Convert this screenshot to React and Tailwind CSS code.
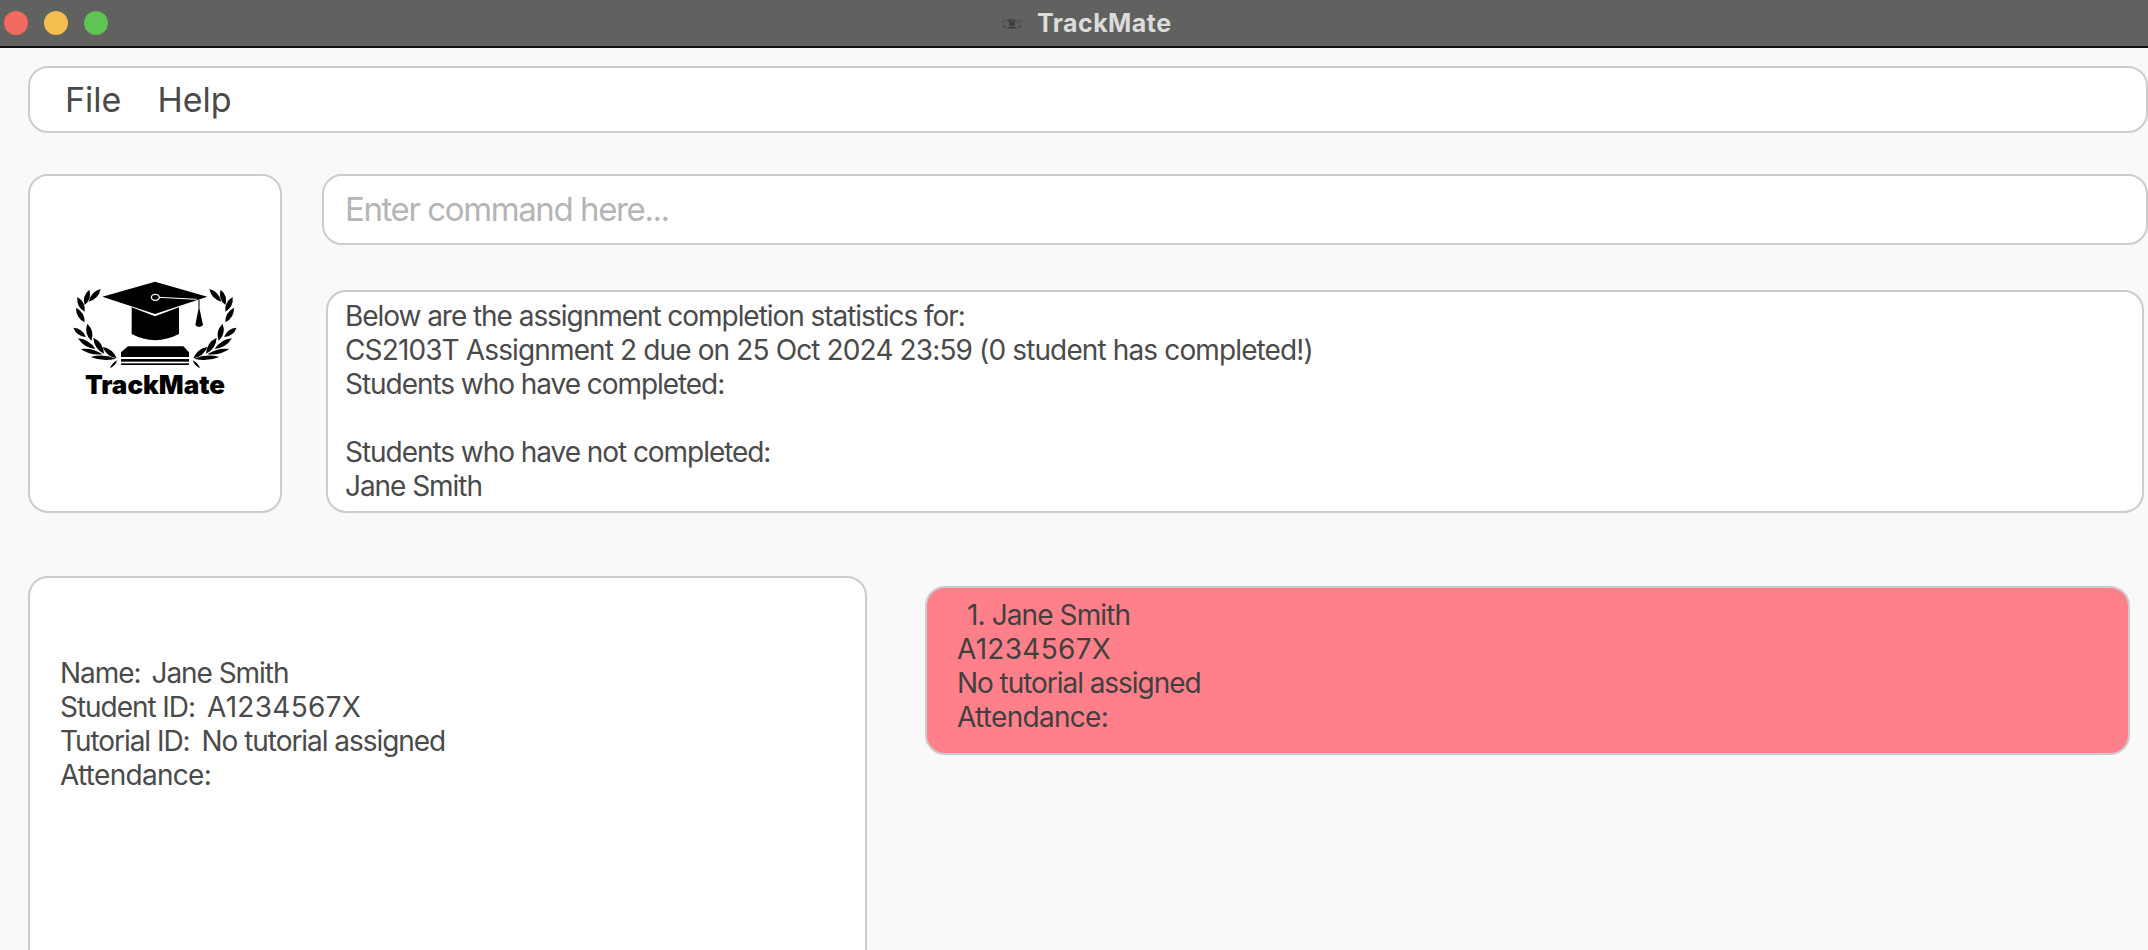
import React from 'react';

const leaf = (x1, y1, x2, y2, w) => {
  const mx = (x1 + x2) / 2;
  const my = (y1 + y2) / 2;
  const dx = x2 - x1;
  const dy = y2 - y1;
  const len = Math.hypot(dx, dy);
  const nx = (-dy / len) * w;
  const ny = (dx / len) * w;
  return `M${x1},${y1} Q${mx + nx},${my + ny} ${x2},${y2} Q${mx - nx},${my - ny} ${x1},${y1} Z`;
};

const laurel = [
  [152, 90, 116, 128, 16],
  [118, 92, 104, 138, 16],
  [82, 114, 104, 158, 16],
  [78, 146, 104, 190, 16],
  [70, 206, 108, 234, 15],
  [112, 194, 124, 246, 17],
  [84, 238, 136, 270, 15],
  [130, 236, 162, 284, 17],
  [92, 270, 158, 286, 13],
  [158, 264, 200, 298, 15],
  [122, 294, 198, 299, 13],
  [180, 328, 202, 304, 7],
];

const Logo = ({ className }) => (
  <svg viewBox="0 0 630 345" className={className} fill="currentColor">
    <polygon points="157,113 315,68 472,113 315,165" />
    <path d="M245,145 L315,172 L387,145 V225 Q315,262 245,225 Z" />
    <ellipse cx="316" cy="115" rx="12" ry="9" fill="none" stroke="#fff" strokeWidth="4" />
    <path d="M328,115 L440,121" stroke="#fff" strokeWidth="3" />
    <path d="M447,122 V146" stroke="currentColor" strokeWidth="3" />
    <path d="M447,142 L459,198 Q447,210 436,198 Z" />
    <path d="M234,262 H400 L417,280 V294 H213 V280 Z" />
    <rect x="213" y="300" width="204" height="8" />
    <rect x="213" y="313" width="204" height="5" />
    <g>
      {laurel.map((l, i) => (
        <path key={i} d={leaf(...l)} />
      ))}
    </g>
    <g transform="translate(630,0) scale(-1,1)">
      {laurel.map((l, i) => (
        <path key={i} d={leaf(...l)} />
      ))}
    </g>
  </svg>
);

const App = () => {
  return (
    <div className="w-[2148px] h-[950px] overflow-hidden bg-[#f9f9f9] text-[#4a4a4a] font-['Inter',sans-serif] flex flex-col">
      <div className="h-[48px] shrink-0 bg-[#616160] border-b-[2px] border-[#111111] flex items-center relative">
        <div className="flex items-center gap-[16px] pl-[4px]">
          <div className="w-[24px] h-[24px] rounded-full bg-[#f1695f]" />
          <div className="w-[24px] h-[24px] rounded-full bg-[#f5bd4f]" />
          <div className="w-[24px] h-[24px] rounded-full bg-[#5fc454]" />
        </div>
        <div className="absolute left-[999px] top-[7px] flex items-center gap-[12px]">
          <Logo className="w-[26px] h-[18px] text-[#3d3d3d]" />
          <span className="text-[25px] leading-[32px] font-bold text-[#dcdcda] tracking-[0.45px]">TrackMate</span>
        </div>
      </div>

      <div className="flex-1 flex flex-col pl-[28px]">
        <div className="mt-[18px] h-[67px] shrink-0 bg-white border-2 border-[#cccccc] rounded-[20px] flex items-center gap-[36px] pl-[35px] text-[34px]">
          <span>File</span>
          <span>Help</span>
        </div>

        <div className="mt-[41px] h-[339px] shrink-0 flex gap-[40px]">
          <div className="w-[254px] shrink-0 bg-white border-2 border-[#cccccc] rounded-[20px] relative">
            <Logo className="absolute left-[20px] top-[83px] w-[210px] h-[115px] text-black" />
            <div className="absolute left-0 right-0 top-[195px] text-center text-[26px] leading-[28px] font-black text-black">TrackMate</div>
          </div>
          <div className="flex-1 flex flex-col min-w-0">
            <div className="h-[71px] shrink-0 bg-white border-2 border-[#cccccc] rounded-[20px] flex items-center pl-[21px] text-[33px] text-[#b5b5b5] tracking-[-1.4px]">
              Enter command here...
            </div>
            <div className="mt-[45px] ml-[4px] mr-[4px] flex-1 bg-white border-2 border-[#cccccc] rounded-[20px] pl-[17px] pt-[7px] text-[28px] leading-[34px] tracking-[-1.05px]">
              <div>Below are the assignment completion statistics for:</div>
              <div className="tracking-[-0.87px]">CS2103T Assignment 2 due on 25 Oct 2024 23:59 (0 student has completed!)</div>
              <div>Students who have completed:</div>
              <div className="h-[34px]" />
              <div>Students who have not completed:</div>
              <div>Jane Smith</div>
            </div>
          </div>
        </div>

        <div className="mt-[63px] flex-1 flex gap-[58px] min-h-0 text-[28px] leading-[34px] tracking-[-1.05px]">
          <div className="w-[839px] h-[500px] shrink-0 bg-white border-2 border-[#cccccc] rounded-[20px] pl-[30px] pt-[78px]">
            <div className="flex gap-[11px]"><span>Name:</span><span>Jane Smith</span></div>
            <div className="flex gap-[12px]"><span>Student ID:</span><span className="tracking-[0.3px]">A1234567X</span></div>
            <div className="flex gap-[12px]"><span>Tutorial ID:</span><span>No tutorial assigned</span></div>
            <div className="tracking-[-0.7px]">Attendance:</div>
          </div>
          <div className="mt-[10px] w-[1205px] h-[169px] shrink-0 bg-[#ff808a] border-2 border-[#cccccc] rounded-[20px] pl-[30px] pt-[10px] text-[#404040]">
            <div className="pl-[10px] tracking-[-0.9px]">1. Jane Smith</div>
            <div className="tracking-[0.3px]">A1234567X</div>
            <div>No tutorial assigned</div>
            <div className="tracking-[-0.7px]">Attendance:</div>
          </div>
        </div>
      </div>
    </div>
  );
};

export default App;
